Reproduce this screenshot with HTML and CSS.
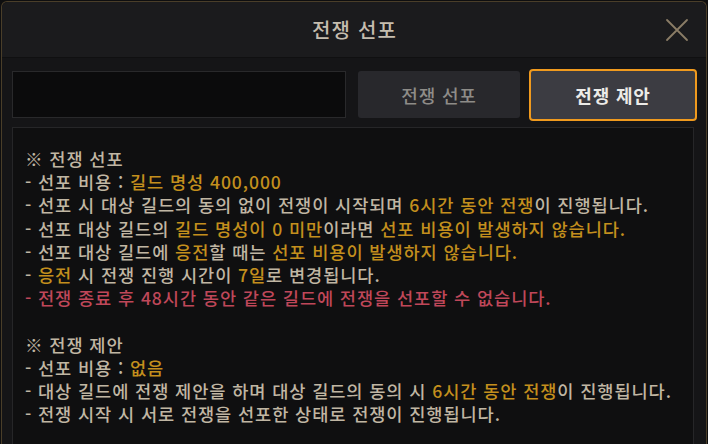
FILE: index.html
```html
<!DOCTYPE html>
<html lang="ko">
<head>
<meta charset="utf-8">
<link rel="stylesheet" href="styles.css">
</head>
<body>
<div class="frame">
  <div class="header">
    <div></div>
    <div class="title">전쟁 선포</div>
    <div class="close-wrap">
      <svg class="close" width="24" height="24" viewBox="0 0 24 24"><path d="M2 2 L22 22 M22 2 L2 22" stroke="#8b7d66" stroke-width="1.8" fill="none" stroke-linecap="round"/></svg>
    </div>
  </div>
  <div class="body">
    <div class="toolbar">
      <div class="input-box"></div>
      <div class="btn btn-off">전쟁 선포</div>
      <div class="btn btn-on">전쟁 제안</div>
    </div>
    <div class="content">
      <div class="line">※ 전쟁 선포</div>
      <div class="line">- 선포 비용 : <span class="gold">길드 명성 400,000</span></div>
      <div class="line">- 선포 시 대상 길드의 동의 없이 전쟁이 시작되며 <span class="gold">6시간 동안 전쟁</span>이 진행됩니다.</div>
      <div class="line">- 선포 대상 길드의 <span class="gold">길드 명성이 0 미만</span>이라면 <span class="gold">선포 비용이 발생하지 않습니다.</span></div>
      <div class="line">- 선포 대상 길드에 <span class="gold">응전</span>할 때는 <span class="gold">선포 비용이 발생하지 않습니다.</span></div>
      <div class="line">- <span class="gold">응전</span> 시 전쟁 진행 시간이 <span class="gold">7일</span>로 변경됩니다.</div>
      <div class="line red">- 전쟁 종료 후 48시간 동안 같은 길드에 전쟁을 선포할 수 없습니다.</div>
      <div class="line blank"></div>
      <div class="line">※ 전쟁 제안</div>
      <div class="line">- 선포 비용 : <span class="gold">없음</span></div>
      <div class="line">- 대상 길드에 전쟁 제안을 하며 대상 길드의 동의 시 <span class="gold">6시간 동안 전쟁</span>이 진행됩니다.</div>
      <div class="line">- 전쟁 시작 시 서로 전쟁을 선포한 상태로 전쟁이 진행됩니다.</div>
    </div>
  </div>
</div>
</body>
</html>
```

FILE: styles.css
```css
* { box-sizing: border-box; }
html, body {
  margin: 0;
  padding: 0;
  width: 708px;
  height: 444px;
  overflow: hidden;
  background: #0e0e0f;
  font-family: "Noto Sans CJK KR", "Noto Sans", sans-serif;
}
.frame {
  margin: 1px 1px 0 1px;
  height: 460px;
  border: 1px solid #4a3e29;
  border-bottom: none;
  border-radius: 6px 6px 0 0;
  background: #151517;
  display: flex;
  flex-direction: column;
}
.header {
  height: 56px;
  flex: none;
  display: grid;
  grid-template-columns: 1fr auto 1fr;
  align-items: center;
  background: #1b1b1d;
  border-radius: 6px 6px 0 0;
  border-bottom: 1px solid #101011;
}
.title {
  color: #c5bdae;
  font-size: 20px;
  font-weight: 500;
  letter-spacing: 1.2px;
  padding-left: 1px;
}
.close-wrap {
  display: flex;
  justify-content: flex-end;
  padding-right: 17px;
}
.close { display: block; }
.body {
  flex: 1;
  padding: 10px 9px 0 10px;
  display: flex;
  flex-direction: column;
}
.toolbar {
  display: flex;
  align-items: center;
  height: 53px;
}
.input-box {
  width: 334px;
  height: 47px;
  background: #0b0b0c;
  border: 1px solid #29292b;
}
.btn {
  display: flex;
  align-items: center;
  justify-content: center;
  font-size: 18px;
  letter-spacing: 0.8px;
}
.btn-off {
  margin-left: 12px;
  width: 162px;
  height: 47px;
  background: #28282c;
  border-radius: 3px;
  color: #8e8c88;
  font-weight: 500;
}
.btn-on {
  margin-left: 9px;
  width: 168px;
  height: 52px;
  background: #3c3c42;
  border: 2px solid #f09a1e;
  border-radius: 4px;
  color: #ecebe8;
  font-weight: 700;
}
.content {
  margin-top: 6px;
  margin-right: 3px;
  flex: 1;
  background: #0f0f10;
  border: 1px solid #262628;
  padding: 19px 12px 0 12px;
  color: #c0b6a3;
  font-size: 17.6px;
  line-height: 23.2px;
  font-weight: 500;
  letter-spacing: 0.9px;
}
.line { white-space: nowrap; }
.blank { height: 23.2px; }
.gold { color: #c38f1d; }
.red { color: #bf4759; }
```
